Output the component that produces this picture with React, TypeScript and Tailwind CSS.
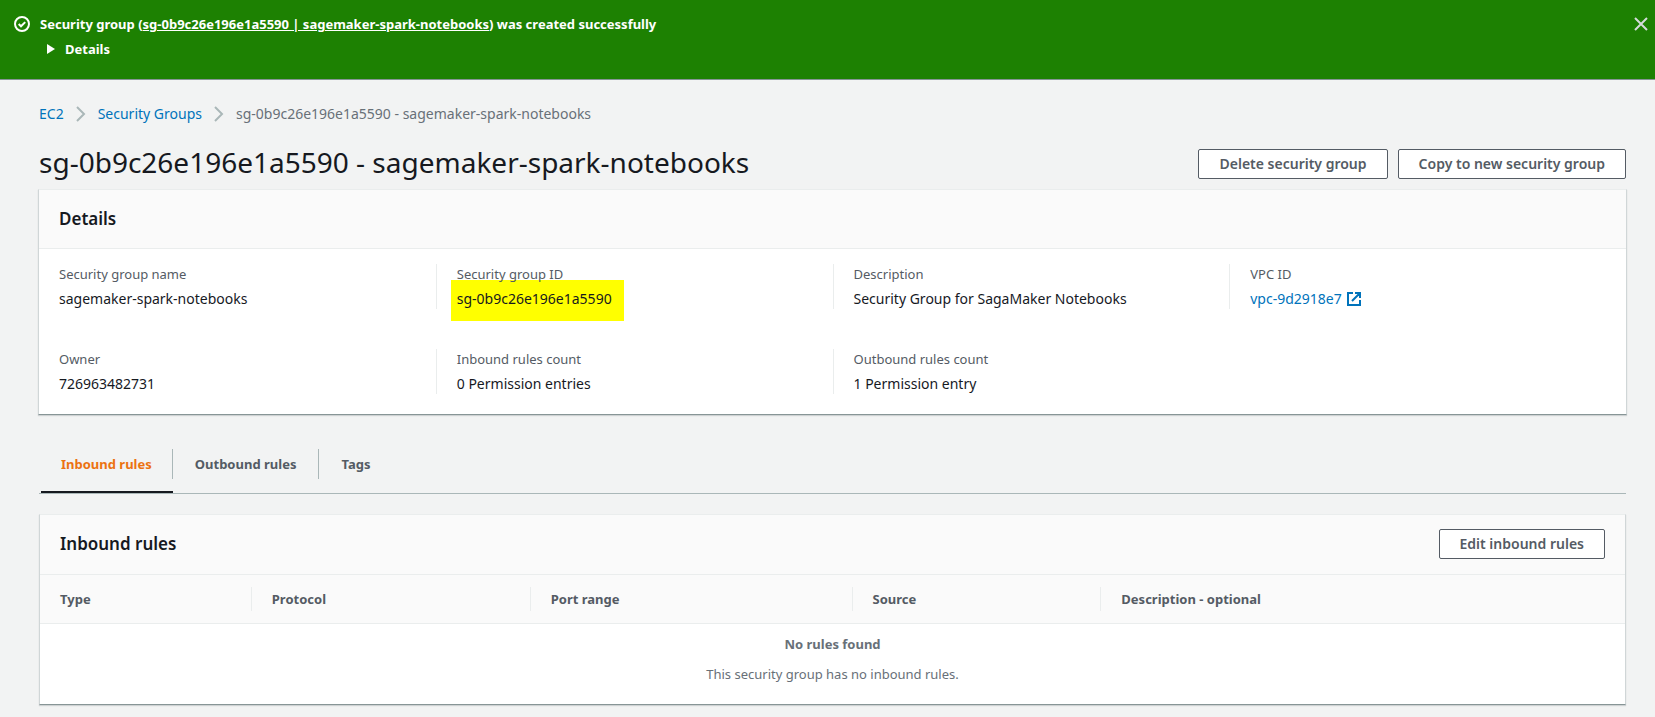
import type { ReactNode } from "react";

type Field = { label: string; value: ReactNode; highlight?: boolean };

function ExternalIcon() {
  return (
    <svg viewBox="0 0 16 16" className="h-4 w-4 shrink-0" fill="none" stroke="currentColor" strokeWidth="2" aria-hidden="true">
      <path d="M7 2H2v12h12V9M9 2h5v5M6 10l8-8" />
    </svg>
  );
}

function Chevron() {
  return (
    <svg viewBox="0 0 16 16" className="h-4 w-4 shrink-0 text-[#aab7b8]" fill="none" stroke="currentColor" strokeWidth="2" aria-hidden="true">
      <path d="M4 1l7 7-7 7" />
    </svg>
  );
}

function Button({ children }: { children: ReactNode }) {
  return (
    <button type="button" className="h-[30px] rounded-xs border border-[#545b64] bg-white px-5 text-sm leading-5 font-semibold whitespace-nowrap text-[#545b64]">
      {children}
    </button>
  );
}

const rows: Field[][] = [
  [
    { label: "Security group name", value: "sagemaker-spark-notebooks" },
    { label: "Security group ID", value: "sg-0b9c26e196e1a5590", highlight: true },
    { label: "Description", value: "Security Group for SagaMaker Notebooks" },
    {
      label: "VPC ID",
      value: (
        <a href="#vpc" className="inline-flex items-center gap-1 text-[#0073bb]">
          vpc-9d2918e7
          <ExternalIcon />
        </a>
      ),
    },
  ],
  [
    { label: "Owner", value: "726963482731" },
    { label: "Inbound rules count", value: "0 Permission entries" },
    { label: "Outbound rules count", value: "1 Permission entry" },
  ],
];

const columns = [
  { name: "Type", width: "w-[13.3%]" },
  { name: "Protocol", width: "w-[17.6%]" },
  { name: "Port range", width: "w-[20.3%]" },
  { name: "Source", width: "w-[15.7%]" },
  { name: "Description - optional", width: "" },
];

const cardClass =
  "border-x border-t border-t-[#eaeded] border-x-[#d0d6d7] border-b border-b-[#879596] bg-white shadow-[0_1px_1px_0_rgba(0,28,36,0.15)]";

export default function App() {
  return (
    <div className="min-h-screen bg-[#f2f3f3] font-['Noto_Sans',sans-serif] text-[13px] leading-5 text-[#16191f]">
      <div role="status" className="flex h-20 items-start border-b border-[#879596] bg-[#1d8102] px-3.5 pt-3.5 font-bold text-white">
        <svg viewBox="0 0 16 16" className="mt-0.5 h-4 w-4 shrink-0" fill="none" stroke="currentColor" strokeWidth="2" aria-hidden="true">
          <circle cx="8" cy="8" r="7" />
          <path d="M4.7 8l2.3 2.3 4.2-4.2" />
        </svg>
        <div className="ml-2.5 flex-1">
          <p>
            Security group (
            <a href="#sg" className="underline">sg-0b9c26e196e1a5590 | sagemaker-spark-notebooks</a>
            ) was created successfully
          </p>
          <button type="button" className="mt-[5px] flex items-center gap-2.5 pl-[7px] font-bold">
            <svg viewBox="0 0 8 10" className="h-2.5 w-2" fill="currentColor" aria-hidden="true">
              <path d="M0 0l8 5-8 5z" />
            </svg>
            Details
          </button>
        </div>
        <button type="button" aria-label="Dismiss" className="mt-0.5 -mr-2 text-[#d5dbdb]">
          <svg viewBox="0 0 16 16" className="h-4 w-4" fill="none" stroke="currentColor" strokeWidth="2" aria-hidden="true">
            <path d="M2 2l12 12M14 2L2 14" />
          </svg>
        </button>
      </div>

      <main className="px-[29px] pt-6 pb-3 pl-[39px]">
        <nav aria-label="Breadcrumb" className="flex items-center gap-[9px] text-sm leading-5">
          <a href="#ec2" className="text-[#0073bb]">EC2</a>
          <Chevron />
          <a href="#groups" className="text-[#0073bb]">Security Groups</a>
          <Chevron />
          <span className="text-[#687078]">sg-0b9c26e196e1a5590 - sagemaker-spark-notebooks</span>
        </nav>

        <div className="mt-5 flex items-start justify-between">
          <h1 className="text-[28px] leading-9">sg-0b9c26e196e1a5590 - sagemaker-spark-notebooks</h1>
          <div className="flex gap-2.5 pt-[5px]">
            <Button>Delete security group</Button>
            <Button>Copy to new security group</Button>
          </div>
        </div>

        <section className={`-mx-px mt-[9px] ${cardClass}`}>
          <h2 className="border-b border-[#eaeded] bg-[#fafafa] px-5 py-[17px] text-[17px] leading-6 font-semibold">Details</h2>
          <div className="flex flex-col gap-10 pt-[15px] pb-5">
            {rows.map((row, i) => (
              <dl key={i} className="grid grid-cols-4">
                {row.map((f, j) => (
                  <div key={f.label} className={`flex h-[45px] flex-col gap-[5px] px-5 ${j > 0 ? "border-l border-[#eaeded]" : ""}`}>
                    <dt className="relative z-10 text-[#545b64]">{f.label}</dt>
                    <dd className="text-sm leading-5">
                      {f.highlight ? <mark className="-mt-[9px] -ml-1.5 block w-fit bg-[#ffff00] pt-[9px] pr-3 pb-3 pl-1.5 text-[#16191f]">{f.value}</mark> : f.value}
                    </dd>
                  </div>
                ))}
              </dl>
            ))}
          </div>
        </section>

        <div role="tablist" className="mt-[34px] flex border-b border-[#aab7b8] pl-0.5 font-bold text-[#545b64]">
          <button type="button" role="tab" aria-selected="true" className="border-b-2 border-[#16191f] pb-3 text-[#ec7211]">
            <span className="block border-r border-[#aab7b8] px-5 py-[5px]">Inbound rules</span>
          </button>
          <button type="button" role="tab" aria-selected="false" className="pb-3.5">
            <span className="block border-r border-[#aab7b8] px-[22px] py-[5px]">Outbound rules</span>
          </button>
          <button type="button" role="tab" aria-selected="false" className="px-[22px] pb-3.5">Tags</button>
        </div>

        <section className={`mt-5 ${cardClass}`}>
          <div className="flex items-center justify-between border-b border-[#eaeded] bg-[#fafafa] px-5 pt-3.5 pb-[15px]">
            <h2 className="text-[17px] leading-6 font-semibold">Inbound rules</h2>
            <Button>Edit inbound rules</Button>
          </div>
          <table className="w-full table-fixed">
            <thead>
              <tr className="border-b border-[#eaeded] bg-[#fafafa] text-left text-[#545b64]">
                {columns.map((c, i) => (
                  <th key={c.name} scope="col" className={`py-3 font-bold ${c.width}`}>
                    <span className={`block px-5 py-0.5 ${i > 0 ? "border-l border-[#eaeded]" : ""}`}>{c.name}</span>
                  </th>
                ))}
              </tr>
            </thead>
            <tbody>
              <tr>
                <td colSpan={5} className="pt-2.5 pb-5 text-center text-[#687078]">
                  <p className="font-bold">No rules found</p>
                  <p className="mt-2.5">This security group has no inbound rules.</p>
                </td>
              </tr>
            </tbody>
          </table>
        </section>
      </main>
    </div>
  );
}
